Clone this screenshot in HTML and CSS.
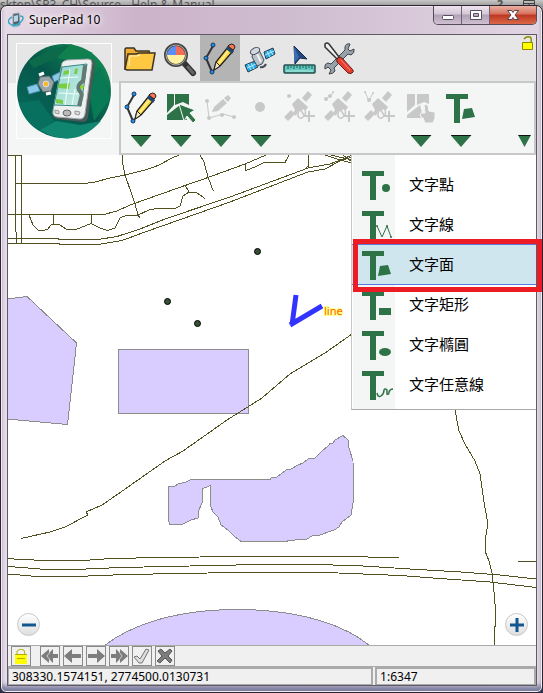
FILE: index.html
```
<!DOCTYPE html>
<html lang="zh-TW">
<head>
    <meta charset="UTF-8">
    <meta name="viewport" content="width=device-width, initial-scale=1.0">
    <title>SuperPad 10</title>
    <link rel="stylesheet" href="styles.css">
</head>
<body>
    <!-- shared icons -->
    <svg class="sprite" aria-hidden="true">
        <symbol id="i-pencil" viewBox="0 0 40 40">
            <path d="M13 8 6 20l6 14" fill="none" stroke="#333" stroke-width="2"/>
            <g fill="#1e90f0" stroke="#1b3550"><circle cx="13" cy="7" r="2"/><circle cx="6" cy="20" r="2"/><circle cx="12" cy="34" r="2"/></g>
            <path d="M14 32l2-8L28 9l5 4-13 15z" fill="#ffd83d" stroke="#222" stroke-width="1.3"/>
            <path d="M19 25 29 12" stroke="#fff1a0" stroke-width="1.5"/>
            <path d="M14 32l2-8 4 4z" fill="#f6e3c0" stroke="#222"/>
            <path d="M26 11l6 5 2-3-6-5z" fill="#24476e"/>
            <path d="M28 8l1-1q3-2 5 0t0 4l-1 1z" fill="#ff7752" stroke="#222"/>
        </symbol>
        <symbol id="i-sat" viewBox="0 0 40 40">
            <path d="M3 30l7-7 4 4-7 7zM21 11l6-7 4 4-6 7z"/>
            <path d="M11 17l6-6 10 9-2 3-4-1-4 2-2 5-3-3 2-3z"/>
            <path d="M17 29q-1-6 6-8 4 5-2 10-3 1-4-2zM19 22l4 6" fill="none" stroke="#c8c8c8" stroke-width="1.5"/>
            <path d="M27 24h2v4h5v2h-5v5h-2v-5h-5v-2h5z"/>
        </symbol>
        <symbol id="i-text" viewBox="0 0 40 40">
            <path d="M5 7h22v5h-8v24h-6V12H5z" fill="#2d7347"/>
        </symbol>
    </svg>

    <div class="desktop">
        <span>sktop\SP3_CH\Source - Help &amp; Manual</span>
        <span class="help">?</span>
        <svg viewBox="0 0 12 12"><path d="M.5 .5h11v11H.5zM0 3.500h12M6 4v6" fill="none" stroke="#444"/></svg>
    </div>

    <div class="window">
        <div class="titlebar">
            <svg class="app-icon" viewBox="0 0 16 16">
                <path d="M5 2l6-1 1 12-7 1z" fill="#52606c" stroke="#8ea4b0"/>
                <path d="M6 4l4-1v6l-4 1z" fill="#b8d8e4"/>
                <path d="M4 5Q-1 8 1 11q3 4 9 1 5-3 5-6 0-2-3-2" fill="none" stroke="#3ca5c4" stroke-width="1.5"/>
                <path d="M2 12l3 3 6-1" fill="none" stroke="#75bfd4"/>
            </svg>
            <h1>SuperPad 10</h1>
            <div class="win-buttons">
                <button aria-label="最小化"><svg viewBox="0 0 14 12"><rect x="1.5" y="6.5" width="11" height="4" rx="1" fill="#fff" stroke="#535163"/></svg></button>
                <button aria-label="最大化"><svg viewBox="0 0 14 12"><path d="M1.500 1.500h11v9h-11zM4.500 4.500v3h5v-3z" fill="#fff" fill-rule="evenodd" stroke="#535163"/></svg></button>
                <button class="close" aria-label="關閉"><svg viewBox="0 0 14 12"><path d="M1.500 1.500h4L7 3.500l1.500-2h4L9 6l3.500 4.500h-4L7 8.500l-1.500 2h-4L5 6z" fill="#fff" stroke="#53404c"/></svg></button>
            </div>
        </div>

        <div class="client">
            <header class="header">
                <div class="logo">
                    <svg viewBox="0 0 96 96">
                        <defs>
                            <linearGradient id="globe" x1="0" y1="1" x2="1" y2="0">
                                <stop offset="0" stop-color="#087060"/><stop offset=".5" stop-color="#05564a"/><stop offset="1" stop-color="#149856"/>
                            </linearGradient>
                            <linearGradient id="screen" x1="0" y1="0" x2="1" y2="1">
                                <stop offset="0" stop-color="#8fd4d0"/><stop offset="1" stop-color="#c8eee4"/>
                            </linearGradient>
                        </defs>
                        <rect x=".5" y=".5" width="95" height="95" fill="none" stroke="#fff"/>
                        <circle cx="48" cy="48" r="47" fill="url(#globe)"/>
                        <path d="M12 18 33 8l22-7-14 14-23 10z" fill="#0c6a4a"/>
                        <path d="M55 1l22 9-20 8-16-3z" fill="#10804f"/>
                        <path d="M3 60l20-3 15 21-14 10Q8 80 3 60z" fill="#08705e"/>
                        <path d="M24 87l16-9 24 4 21-4Q58 108 24 87z" fill="#108570"/>
                        <path d="M84 24l10 32-16 22-5-30z" fill="#087a55"/>
                        <path d="M11 44l10-3 3 7-11 3zM36 33l8-4 3 6-9 4z" fill="#8ac8e8" stroke="#428cae"/>
                        <path d="M24 34l9-1 5 6-3 9-8 1-5-8z" fill="#9aa3a7" stroke="#5e686c"/>
                        <path d="M23 32l5-2M30 51l5-1" stroke="#fff" stroke-width="3"/>
                        <circle cx="30" cy="41" r="3" fill="#f5bb35" stroke="#ddd"/>
                        <path d="M46 21q1-4 5-4l23-1q5 0 5 5l-7 53q-1 5-5 5l-26-3q-5-1-4-6z" fill="#4b5958"/>
                        <path d="M46 20q1-2 5-3l21-1q4 0 4 4l-7 51q-1 5-5 5l-23-2q-5-1-4-6z" fill="#eef0f0" stroke="#9ca6a5"/>
                        <path d="M46 24l25-3-6 42-27-1z" fill="url(#screen)" stroke="#39868a"/>
                        <path d="M43 41l11-1-1 6-11-1zM48 28l6-1v4l-7 1zM59 26l3-1-1 6h-3zM40 56l7 1v4l-7-1z" fill="#77ce42"/>
                        <path d="M44 35l18-1M54 26l-5 36M43 50l20 1M59 46l-3 16" fill="none" stroke="#f3fff8"/>
                        <path d="M69 22l-2 16q-6 4-4 9 4 4 2 8l-2 8" fill="none" stroke="#637a73" stroke-width="4"/>
                        <circle cx="66" cy="44" r="2" fill="#8fd228"/>
                        <path d="M39 67l4 1v3l-4-1zM59 68l5 1-1 3-4-1z" fill="#ddd" stroke="#999"/>
                        <ellipse cx="51" cy="70" rx="4" ry="3" fill="#bbb" stroke="#666"/>
                    </svg>
                </div>
                <div class="tools">
                    <nav class="tabs">
                        <button aria-label="檔案"><svg viewBox="0 0 40 40">
                            <path d="M5 31V11l1-1h8l2 3h13l1 3v15z" fill="#f0ac2e" stroke="#3c3428" stroke-width="1.5"/>
                            <path d="M5 31l3-15h8l3-1h16l-3 17H7z" fill="#ffc843" stroke="#3c3428" stroke-width="1.500"/>
                            <path d="M9 28l1-10h7l3-1" fill="none" stroke="#fff0c0"/>
                        </svg></button>
                        <button aria-label="查詢"><svg viewBox="0 0 40 40">
                            <path d="M24 25l9 10" stroke="#333" stroke-width="6" stroke-linecap="round"/>
                            <path d="M28 29l5 6" stroke="#666" stroke-width="3" stroke-linecap="round"/>
                            <circle cx="16" cy="17" r="10" fill="#fff1a0"/>
                            <path d="M16 17V7A10 10 0 0 0 6 17z" fill="#5b8ff5"/>
                            <path d="M16 17V7a10 10 0 0 1 10 10z" fill="#f46c58"/>
                            <circle cx="16" cy="17" r="10.500" fill="none" stroke="#444" stroke-width="3"/>
                            <circle cx="16" cy="17" r="10" fill="none" stroke="#aaa"/>
                        </svg></button>
                        <button class="active" aria-label="編輯"><svg><use href="#i-pencil"/></svg></button>
                        <button aria-label="衛星"><svg viewBox="0 0 40 40">
                            <path d="M5 27l10-4 3 6-10 5zM24 14l9-4 2 6-9 5z" fill="#27a9e5" stroke="#263c4b"/>
                            <path d="M8 26l3 6M11 25l3 6M7 30l9-4M27 13l3 6M30 12l3 5M25 17l9-4" stroke="#b7eeff"/>
                            <path d="M13 15l6-3 5 10-2 4-5 2-5-9z" fill="#b9c1c9" stroke="#444c55"/>
                            <path d="M17 16l4 8" stroke="#eef2f5" stroke-width="2"/>
                            <ellipse cx="15" cy="13" rx="5" ry="3" fill="#d3d9df" stroke="#444c55" transform="rotate(-28 15 13)"/>
                            <path d="M20 29q4 1 6-3" fill="none" stroke="#444c55" stroke-width="2"/>
                        </svg></button>
                        <button aria-label="測量"><svg viewBox="0 0 40 40">
                            <path d="M14 8l13 13-7-1-5 6z" fill="#254783" stroke="#182a4c"/>
                            <path d="M14 9v16l5-6z" fill="#3d6db1"/>
                            <rect x="4" y="27" width="31" height="8" rx="1" fill="#63c7bd" stroke="#244e4d" stroke-width="1.500"/>
                            <path d="M8 28v3m3-3v2m3-2v3m3-3v2m3-2v3m3-3v2m3-2v3m3-3v2m3-2v3" stroke="#17605c"/>
                            <path d="M6 33h27" stroke="#b5f0e8"/>
                        </svg></button>
                        <button aria-label="設定"><svg viewBox="0 0 40 40">
                            <path d="M30 6l-2 5 2 2 4-2q1 4-3 6l-3-1-14 14 1 3q-2 3-6 3l2-4-3-3-3 2q-1-5 3-6l3 1 14-14v-3q1-4 5-3z" fill="#98a1aa" stroke="#3d444b"/>
                            <path d="M5 6q2-2 4 0l10 13-2 2L5 9z" fill="#eee" stroke="#333" stroke-width="1.500"/>
                            <path d="M18 20q2-2 4 0l11 12q1 2-1 3-2 1-4 0L17 24q-1-2 1-4z" fill="#e73e30" stroke="#60221f"/>
                            <path d="M21 22l9 10" stroke="#ff8a78"/>
                        </svg></button>
                        <svg class="lock" viewBox="0 0 12 15" aria-hidden="true">
                            <path d="M2 3q2-3 6-2 2 1 1 5" fill="none" stroke="#8a8a00" stroke-width="1.500"/>
                            <path d="M.5 6.500h10v7H.5z" fill="#ff0" stroke="#8a8a00"/>
                        </svg>
                    </nav>
                    <div class="panel">
                        <button class="tool has-arrow" aria-label="繪製"><svg><use href="#i-pencil"/></svg></button>
                        <button class="tool has-arrow" aria-label="選取"><svg viewBox="0 0 40 40" fill="#2d7347">
                            <path d="M6 7h7v11l-7 8zM14 7h14v11l-6-3-8 3zM6 28l13-10 7 15H6z"/>
                            <path d="M18 17l16 6-5 3 6 7-3 3-6-7-3 5z" stroke="#f4f6f5"/>
                        </svg></button>
                        <button class="tool has-arrow" aria-label="節點編輯" disabled><svg viewBox="0 0 40 40" fill="#c8c8c8">
                            <path d="M6 14l2 17 14-4 11 3" fill="none" stroke="#c8c8c8"/>
                            <circle cx="6" cy="14" r="2"/><circle cx="8" cy="31" r="2"/><circle cx="21" cy="28" r="2"/><circle cx="33" cy="30" r="2"/>
                            <path d="M11 25l2-5 9-8 4 4-9 8zM23 11l4-3 3 3-3 4z"/>
                        </svg></button>
                        <button class="tool has-arrow" aria-label="點" disabled><svg viewBox="0 0 40 40" fill="#c8c8c8"><circle cx="19" cy="20" r="5"/></svg></button>
                        <button class="tool" aria-label="GPS 點" disabled><svg viewBox="0 0 40 40" fill="#c8c8c8"><use href="#i-sat"/><circle cx="8" cy="9" r="2"/></svg></button>
                        <button class="tool" aria-label="GPS 線" disabled><svg viewBox="0 0 40 40" fill="#c8c8c8"><use href="#i-sat"/><path d="M4 13l9-8" stroke="#c8c8c8"/><circle cx="5" cy="12" r="2"/><circle cx="9" cy="9" r="2"/><circle cx="12" cy="5" r="1"/></svg></button>
                        <button class="tool" aria-label="GPS 面" disabled><svg viewBox="0 0 40 40" fill="#c8c8c8"><use href="#i-sat"/><path d="M4 5l4 9 4-8" fill="none" stroke="#c8c8c8"/><circle cx="4" cy="5" r="1"/><circle cx="8" cy="13" r="2"/><circle cx="12" cy="6" r="1"/></svg></button>
                        <button class="tool has-arrow" aria-label="拖曳" disabled><svg viewBox="0 0 40 40" fill="#c8c8c8">
                            <path d="M6 7h8v11l-8 7zM16 7h12v10l-5-2-7 3zM6 28l13-10 2 8-1 5H6z"/>
                            <path d="M23 18q3-2 4 1l1 5 6 1v6l-2 5h-8l-2-5-3-2 1-3h4z" stroke="#f4f6f5"/>
                        </svg></button>
                        <button class="tool has-arrow" aria-label="文字"><svg viewBox="0 0 40 40"><use href="#i-text"/><path d="M23 22l8-1 3 9-13 2z" fill="#2d7347"/></svg></button>
                        <button class="more" aria-label="更多"></button>
                    </div>
                </div>
            </header>

            <main class="map">
                <svg class="map-canvas" viewBox="8 155 528 490" preserveAspectRatio="xMinYMin slice">
                    <g class="area">
                        <path d="M7 299 27 296.500 76.500 343 67.500 424.500 7 419z"/>
                        <path d="M118.500 349.500h130v64h-130z"/>
                        <path d="M168.500 486.500 175 486 178 484 186 482 191 479.500H270L271 478 277 477 286 470 291 469 298 465 303 463 308 459 315 458 321 452 328 446 330 443.500 333 443 335 440 343 435.500 348 440 349 448 353 461 353.500 500 351 515 342 522 339 527 334 530 320 535 312 536 307 539 289 540.500 286 541.500H241L234 536 228 530 221 525 218 517 213 512 211 507 210.500 485.500 203 488.500 202 503 198 512V518L191 520 182 524.500H170L168.500 521z"/>
                        <path d="M104 646C124 630 166 609.500 237 609.500S350 629 370 646z"/>
                    </g>
                    <g class="road">
                        <path d="M8 155.500H21.500V243M15.500 155V220L16.500 243"/>
                        <path d="M15 183.500H84L95 182 110 178 125 175 145 170 158 165.500 172 158 179 155"/>
                        <path d="M122.500 155 123 165 125 175 132 195 135 204 138 215 140 218"/>
                        <path d="M8 214.500H104L117 211 130 205 185 185.500 208 177.500 245 164 266 155"/>
                        <path d="M29 215 33 225 38 230H45L48 229 51 225 54 224.500 53.500 215M54 224 60 225 66 229 74 230 80 228 87 225 92 223.500 91.500 215M92 224 100 228 108 230.500 115 228 120 218 126 215.500H137L150 209.500 158 208.500H175L180 206 183 196 189 192 185 185M189 192 197 193 205 198.500"/>
                        <path d="M200 155 204 162 208 177 213.500 191.500"/>
                        <path d="M8 238.500H58V239.500H98L117 236.500 140 229 165 219 230 197 300 171 308 168 330 164 343 159 352 155"/>
                        <path d="M8 243.500H59V244.500H98L122 240.500 145 232 230 202 300 175 308 172 325 169 340 161 352 157"/>
                        <path d="M245 164 246 170.500 255 167 264 162.500H285L289 155M308.500 155V166L305 169M325 155 340 160 352 163M331 155 352 160M343 155 352 162"/>
                        <path d="M352 334 325 353 290 374 262 398 227 420 183 451 165 461 118 494 102 505 86 512 88 515 65 527 50 532 21 538.500"/>
                        <path d="M8 558.500 20 559.500 48 560.500H83L111 558.500 162 557.500 238 556.500H337L399 557.500"/>
                        <path d="M8 566.500 28 568 46 569.500H75L121 567.500 167 566.500 213 565.500 259 564.500H318L363 566 410 569 461 572 500 575 536 579"/>
                        <path d="M8 574 37 576.500H75L126 574.500 181 573.500 235 572.500H326L400 575.500 440 578.500 490 582 536 587.500"/>
                        <path d="M518 561.500h20"/>
                        <path d="M454 405 459 431 465 444 475 461 480 474 484 502 488 524 485 540V551L489 561 492 573 494 592 495.500 610V626H494.500V645"/>
                    </g>
                    <g class="point">
                        <circle cx="257.500" cy="251.500" r="3"/><circle cx="167.500" cy="301.500" r="3"/><circle cx="197.500" cy="323.500" r="3"/>
                    </g>
                    <path class="mark" d="M296 295 292 325M290 325 322 306"/>
                    <text class="map-label" x="324" y="315">line</text>
                </svg>

                <button class="zoom zoom-out" aria-label="縮小"><svg viewBox="0 0 16 16"><path d="M1 8h14" stroke="#12578f" stroke-width="3"/></svg></button>
                <button class="zoom zoom-in" aria-label="放大"><svg viewBox="0 0 16 16"><path d="M1 8h14M8 1v14" stroke="#12578f" stroke-width="3"/></svg></button>

                <div class="menu">
                    <button><svg viewBox="0 0 40 40"><use href="#i-text"/><circle cx="29" cy="24" r="4"/></svg>文字點</button>
                    <button><svg viewBox="0 0 40 40"><use href="#i-text"/><path d="M20 22l5 11 5-11 4 11" fill="none" stroke="#2d7347"/><circle cx="20" cy="22" r="1"/><circle cx="30" cy="22" r="1"/><circle cx="34" cy="33" r="1"/></svg>文字線</button>
                    <button class="selected"><svg viewBox="0 0 40 40"><use href="#i-text"/><path d="M23 22l8-1 3 9-13 2z"/></svg>文字面</button>
                    <button><svg viewBox="0 0 40 40"><use href="#i-text"/><path d="M22 24h12v7H22z"/></svg>文字矩形</button>
                    <button><svg viewBox="0 0 40 40"><use href="#i-text"/><ellipse cx="28" cy="28" rx="6" ry="4"/></svg>文字橢圓</button>
                    <button><svg viewBox="0 0 40 40"><use href="#i-text"/><path d="M20 29q1 5 4 3 3-2 3-6 1-2 3 0v4q2 1 2-2 1-3 4-3" fill="none" stroke="#2d7347" stroke-width="1.500"/></svg>文字任意線</button>
                </div>
            </main>

            <div class="navbar">
                <button class="nav-lock" aria-label="鎖定"><svg viewBox="0 0 18 18"><path d="M5 8V4q3-3 7-1l1 5" fill="none" stroke="#b8b000"/><path d="M3 8h12v9H3z" fill="#ff0"/><path d="M3 7.500h12M5 11.500h8" stroke="#b8a800"/></svg></button>
                <button aria-label="第一筆"><svg viewBox="0 0 18 18"><path d="M0 9l8-7v4l4-4v5h5v4h-5v5l-4-4v4z"/><path d="M9 5 6 9l3 4" fill="none" stroke="#ccc"/></svg></button>
                <button aria-label="上一筆"><svg viewBox="0 0 18 18"><path d="M0 9l8-7v5h9v4H8v5z"/></svg></button>
                <button aria-label="下一筆"><svg viewBox="0 0 18 18"><path d="M18 9l-8-7v5H1v4h9v5z"/></svg></button>
                <button aria-label="最後一筆"><svg viewBox="0 0 18 18"><path d="M18 9l-8-7v4L6 2v5H1v4h5v5l4-4v4z"/><path d="M9 5l3 4-3 4" fill="none" stroke="#ccc"/></svg></button>
                <button aria-label="確定"><svg viewBox="0 0 18 18"><path d="M1 10l3-1 3 3 6-10 3 1-7 13H6z" fill="#ddd" stroke="#777"/></svg></button>
                <button aria-label="取消"><svg viewBox="0 0 18 18"><path d="M2 4l3-2 4 4 5-4 2 2-4 5 4 4-2 3-5-5-5 5-3-2 5-5z" stroke="#555"/></svg></button>
            </div>

            <footer class="status">
                <span>308330.1574151, 2774500.0130731</span>
                <span>1:6347</span>
            </footer>
        </div>
    </div>
</body>
</html>
```

FILE: styles.css
```
* {
    box-sizing: border-box;
    margin: 0;
    padding: 0;
}

body, html {
    height: 100%;
    overflow: hidden;
}

body {
    display: flex;
    flex-direction: column;
    background: #26304a;
    font-family: "Noto Sans", "Noto Sans CJK TC", sans-serif;
    font-size: 12px;
    color: #000;
}

button {
    border: none;
    background: none;
    font: inherit;
    color: inherit;
}

svg {
    display: block;
}

.sprite {
    position: absolute;
    width: 0;
    height: 0;
}

/* window behind, mostly covered by the frame */
.desktop {
    display: flex;
    gap: 20px;
    height: 14px;
    margin-bottom: -9px;
    padding-right: 8px;
    background: linear-gradient(#c8c8c8, #999 6px);
    color: #555;
    font-size: 12px;
    line-height: 10px;
}

.desktop .help {
    margin-left: auto;
    font-weight: 700;
}

.desktop svg {
    width: 12px;
    height: 12px;
}

/* window frame */
.window {
    position: relative;
    flex: 1;
    display: flex;
    flex-direction: column;
    min-height: 0;
    padding: 0 5px 6px 6px;
    border: 1px solid #2a2530;
    border-radius: 7px 7px 6px 6px;
    background: linear-gradient(90deg, #e8dce8, #ccb4cb 25%, #cfbdd0 55%, #e2d5e3);
    box-shadow: inset 0 0 0 1px #f3eaf3, inset 0 -6px 4px #7c80a0;
}

.titlebar {
    display: flex;
    align-items: flex-start;
    height: 28px;
}

.app-icon {
    width: 16px;
    height: 16px;
    margin: 6px 5px 0 1px;
}

.titlebar h1 {
    flex: 1;
    font-size: 12px;
    font-weight: 400;
    line-height: 27px;
    text-shadow: 0 0 6px #fff, 0 0 6px #fff;
}

.win-buttons {
    display: flex;
    border: 1px solid #554c5a;
    border-top: none;
    border-radius: 0 0 5px 5px;
    overflow: hidden;
}

.win-buttons button {
    display: flex;
    align-items: center;
    justify-content: center;
    width: 28px;
    height: 18px;
    border-right: 1px solid #6e6375;
    background: linear-gradient(#eee4ee, #d4c6d5 45%, #b0a0b3 50%, #d0c0d2);
}

.win-buttons .close {
    width: 46px;
    border-right: none;
    background: linear-gradient(#eab0a2, #d4705c 45%, #bd3522 50%, #dc6847);
}

.win-buttons svg {
    width: 14px;
    height: 12px;
}

.client {
    flex: 1;
    display: flex;
    flex-direction: column;
    min-height: 0;
    border: 1px solid #5f5a66;
    background: #f0f0f0;
}

/* toolbar */
.header {
    display: flex;
    height: 120px;
    background: linear-gradient(#e6e6e6 48px, #f4f6f5 48px);
}

.logo {
    width: 111px;
    padding: 8px;
}

.logo svg {
    width: 96px;
    height: 96px;
}

.tools {
    flex: 1;
    display: flex;
    flex-direction: column;
}

.tabs {
    display: flex;
    height: 46px;
    padding-left: 1px;
}

.tabs button {
    display: flex;
    align-items: center;
    width: 40px;
}

.tabs button svg,
.tool svg,
.menu svg {
    width: 40px;
    height: 40px;
}

.tabs .active {
    background: #b4b4b4;
}

.lock {
    width: 12px;
    height: 15px;
    margin: 1px 2px 0 auto;
}

.panel {
    flex: 1;
    display: flex;
    border: 2px solid #c8c8c8;
    background: #f4f6f5;
}

.tool {
    display: flex;
    flex-direction: column;
    align-items: center;
    width: 40px;
    padding-top: 4px;
}

/* drop-down arrows */
.has-arrow::after,
.more::after {
    content: "";
    width: 21px;
    height: 12px;
    margin-top: 8px;
    background: linear-gradient(#111 1px, #2d7347 1px);
    clip-path: polygon(0 0, 100% 0, 50% 100%);
}

.more {
    display: flex;
    align-items: flex-start;
    margin-left: auto;
    padding: 44px 3px 0 0;
}

.more::after {
    width: 13px;
}

/* map */
.map {
    position: relative;
    flex: 1;
    min-height: 0;
    background: #fff;
}

.map-canvas {
    width: 100%;
    height: 100%;
}

.area {
    fill: #d9ccff;
    stroke: #8c8c8c;
    shape-rendering: crispEdges;
}

.road {
    fill: none;
    stroke: #505020;
    shape-rendering: crispEdges;
}

.point {
    fill: #355035;
    stroke: #000;
}

.mark {
    fill: none;
    stroke: #33f;
    stroke-width: 5;
}

.map-label {
    fill: #f60;
    stroke: #ffff80;
    stroke-width: 2px;
    paint-order: stroke;
    font-size: 11px;
}

.zoom {
    position: absolute;
    bottom: 9px;
    display: flex;
    align-items: center;
    justify-content: center;
    width: 23px;
    height: 23px;
    border: 1px solid #c8c8c8;
    border-radius: 50%;
    background: linear-gradient(#fff, #dedede);
}

.zoom svg {
    width: 16px;
    height: 16px;
}

.zoom-out {
    left: 9px;
}

.zoom-in {
    right: 8px;
}

/* text tool menu */
.menu {
    position: absolute;
    top: 0;
    right: 0;
    width: 185px;
    padding: 9px 0 5px;
    border-left: 1px solid #c8c8c8;
    border-bottom: 1px solid #aaa;
    background: linear-gradient(90deg, #fff 1px, #f4f6f5 1px, #f4f6f5 43px, #fff 43px);
}

.menu button {
    position: relative;
    display: flex;
    align-items: center;
    gap: 12px;
    width: 100%;
    height: 40px;
    padding-left: 5px;
    font-size: 15px;
    line-height: 20px;
}

.menu svg {
    fill: #2d7347;
}

.menu .selected {
    background: #cfe6ee;
    box-shadow: inset 0 1px #5a78e0, 0 1px #5a78e0;
}

/* highlight frame */
.menu .selected::after {
    content: "";
    position: absolute;
    inset: -5px -6px -8px 1px;
    z-index: 1;
    border: 5px solid #ed1c24;
}

/* record navigation */
.navbar {
    display: flex;
    gap: 3px;
    padding: 0 3px;
    height: 21px;
    border-top: 1px solid #aaa;
}

.navbar button {
    width: 20px;
    height: 20px;
    border: 1px solid #8a8a8a;
}

.navbar .nav-lock {
    margin-right: 6px;
}

.navbar svg {
    width: 18px;
    height: 18px;
    fill: #7d7d7d;
}

.status {
    display: flex;
    gap: 2px;
    line-height: 15px;
    border-top: 1px solid #aaa;
}

.status span {
    flex: 7;
    padding-left: 3px;
    border: 1px solid #aaa;
    border-top-width: 2px;
    border-right-width: 2px;
}

.status span + span {
    flex: 3;
    border-left-width: 2px;
}
```
